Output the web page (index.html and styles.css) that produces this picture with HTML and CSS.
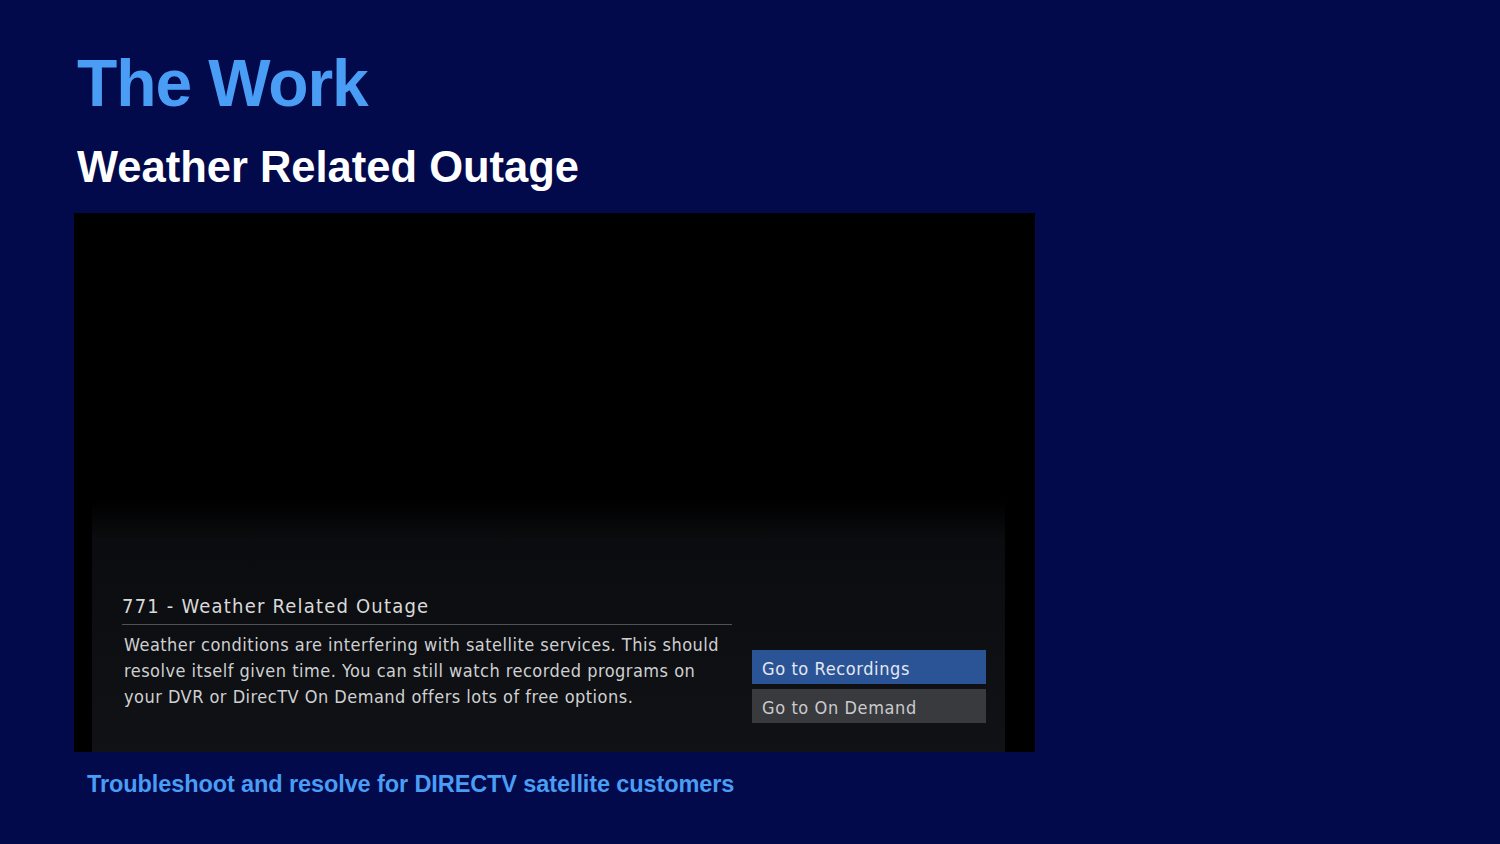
FILE: index.html
```html
<!DOCTYPE html>
<html lang="en">
<head>
    <meta charset="UTF-8">
    <meta name="viewport" content="width=device-width, initial-scale=1.0">
    <title>The Work</title>
    <link rel="stylesheet" href="styles.css">
</head>
<body>
    <div class="slide">
        <h1 class="title">The Work</h1>
        <h2 class="subtitle">Weather Related Outage</h2>

        <div class="screen">
            <div class="panel">
                <div class="message">
                    <div class="msg-title">771 - Weather Related Outage</div>
                    <div class="msg-body">Weather conditions are interfering with satellite services. This should<br>resolve itself given time. You can still watch recorded programs on<br>your DVR or DirecTV On Demand offers lots of free options.</div>
                </div>
                <div class="actions">
                    <div class="action selected">Go to Recordings</div>
                    <div class="action">Go to On Demand</div>
                </div>
            </div>
        </div>

        <p class="caption">Troubleshoot and resolve for DIRECTV satellite customers</p>
    </div>
</body>
</html>
```

FILE: styles.css
```css
body {
    margin: 0;
    background-color: #020a4b;
    font-family: "Liberation Sans", Arial, sans-serif;
    height: 844px;
    overflow: hidden;
}
.slide {
    padding: 0 0 0 74px;
}
.title {
    margin: 0;
    padding: 45px 0 0 3px;
    font-size: 66px;
    line-height: 76px;
    letter-spacing: -1.1px;
    color: #4a9df5;
    font-weight: bold;
}
.subtitle {
    margin: 0;
    padding: 21px 0 0 3px;
    font-size: 43.5px;
    line-height: 50px;
    color: #ffffff;
    font-weight: bold;
}
.screen {
    margin-top: 21px;
    width: 961px;
    height: 539px;
    background-color: #000000;
    display: flex;
    flex-direction: column;
    justify-content: flex-end;
}
.panel {
    margin: 0 30px 0 18px;
    height: 252px;
    background: linear-gradient(to bottom, #000000 0px, #0b0c0f 40px, #101215 100%);
    display: flex;
    font-family: "DejaVu Sans Condensed", "DejaVu Sans", Verdana, sans-serif;
}
.message {
    width: 610px;
    margin-left: 30px;
    padding-top: 94px;
}
.msg-title {
    font-size: 20px;
    line-height: 24px;
    letter-spacing: 1.2px;
    color: #dadada;
    padding-bottom: 6px;
    border-bottom: 1px solid #505256;
}
.msg-body {
    padding: 7px 0 0 2px;
    font-size: 18px;
    line-height: 26px;
    letter-spacing: 0.48px;
    color: #cfd0d2;
    white-space: nowrap;
}
.actions {
    margin-left: 20px;
    padding-top: 150px;
    width: 234px;
    display: flex;
    flex-direction: column;
    gap: 5px;
}
.action {
    height: 34px;
    line-height: 38px;
    padding-left: 10px;
    font-size: 18px;
    letter-spacing: 0.6px;
    color: #cbcbcd;
    background-color: #393a3e;
}
.action.selected {
    background-color: #2b5497;
    color: #e4e8f0;
}
.caption {
    margin: 0;
    padding: 18px 0 0 13px;
    font-size: 23.5px;
    line-height: 28px;
    font-weight: bold;
    letter-spacing: -0.1px;
    color: #4a9df5;
}
```
